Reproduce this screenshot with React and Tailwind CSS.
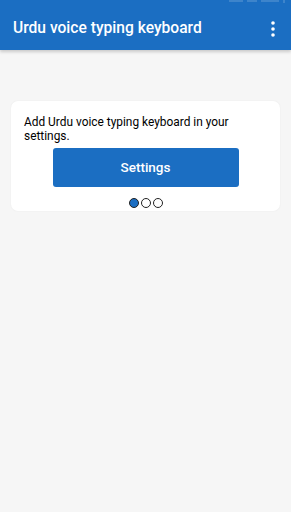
export default function App() {
  return (
    <div className="min-h-[512px] w-full bg-[#f6f6f6] font-['Roboto',sans-serif]">
      <div className="relative flex h-[50px] items-center justify-between bg-[#1b6ec2] pl-[13px] pr-[16px] pt-[7px] shadow-[0_2px_3px_rgba(0,0,0,0.18)]">
        <div className="absolute right-[6px] top-0 flex gap-[4px] opacity-15">
          <span className="h-[2px] w-[14px] bg-white" />
          <span className="h-[2px] w-[10px] bg-white" />
          <span className="h-[2px] w-[18px] bg-white" />
          <span className="h-[3px] w-[2px] bg-white" />
        </div>
        <h1 className="text-[15.6px] font-medium text-white">Urdu voice typing keyboard</h1>
        <svg width="4" height="16" viewBox="0 0 4 16" className="mt-[1px]">
          <circle cx="2" cy="2" r="1.8" fill="white" />
          <circle cx="2" cy="8" r="1.8" fill="white" />
          <circle cx="2" cy="14" r="1.8" fill="white" />
        </svg>
      </div>

      <div className="px-[11px] pt-[51px]">
        <div className="rounded-[7px] bg-white pb-[3px] pl-[13px] pr-[12px] pt-[15px] shadow-[0_0_2px_rgba(0,0,0,0.06)]">
          <p className="text-[11.9px] leading-[13.5px] text-black">
            Add Urdu voice typing keyboard in your settings.
          </p>
          <div className="flex justify-center pr-[1px]">
            <button className="mt-[5px] h-[39px] w-[186px] rounded-[3px] bg-[#1b6ec2] text-[13.5px] font-medium text-white">
              Settings
            </button>
          </div>
          <div className="flex justify-center gap-[2px] pt-[11px] pb-[0px]">
            <span className="h-[10px] w-[10px] rounded-full border border-[#222] bg-[#1b6ec2]" />
            <span className="h-[10px] w-[10px] rounded-full border border-[#222] bg-white" />
            <span className="h-[10px] w-[10px] rounded-full border border-[#222] bg-white" />
          </div>
        </div>
      </div>
    </div>
  );
}
